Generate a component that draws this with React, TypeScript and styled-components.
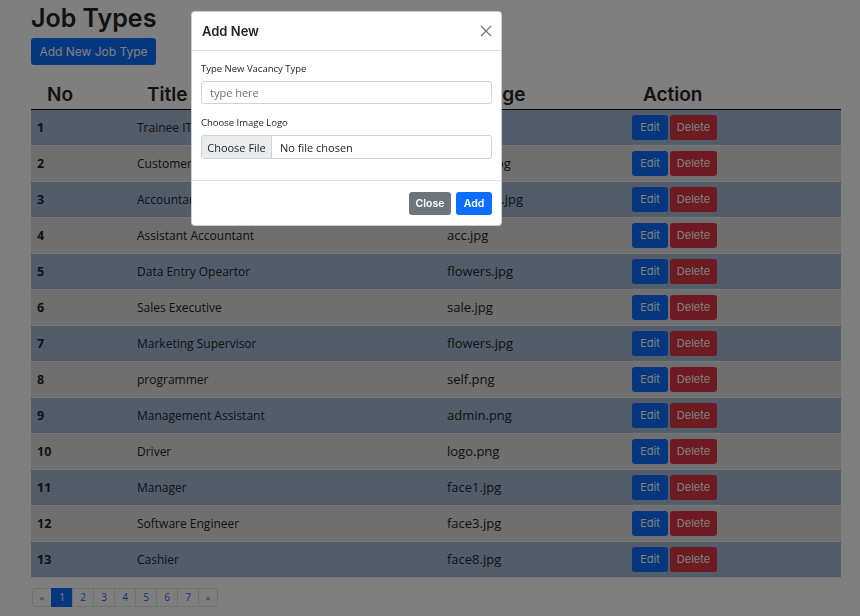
import styled, { createGlobalStyle } from 'styled-components'

const GlobalStyle = createGlobalStyle`
  body {
    margin: 0;
    background: #ffffff;
    font-family: "Open Sans", "Liberation Sans", sans-serif;
    color: #212529;
  }
  * { box-sizing: border-box; }
`

const Page = styled.div`
  padding: 3px 19px 0 31px;
  width: 860px;
  height: 616px;
`

const Heading = styled.h1`
  margin: 0;
  font-family: Inter, "Liberation Sans", sans-serif;
  font-weight: 600;
  font-size: 25px;
  line-height: 30px;
  color: #212529;
`

const PrimaryButton = styled.button`
  display: block;
  margin-top: 5px;
  height: 27px;
  width: 125px;
  padding: 0;
  border: none;
  border-radius: 3px;
  background: #0d6efd;
  color: #ffffff;
  font-family: Inter, "Liberation Sans", sans-serif;
  font-size: 12px;
`

const Table = styled.table`
  margin-top: 17px;
  width: 810px;
  border-collapse: collapse;
  table-layout: fixed;
`

const Th = styled.th<{ $w: number; $pad: number }>`
  width: ${(p) => p.$w}px;
  height: 27px;
  padding: 0 0 1px ${(p) => p.$pad}px;
  text-align: left;
  font-family: Inter, "Liberation Sans", sans-serif;
  font-weight: 600;
  font-size: 19px;
  border-bottom: 1px solid #000000;
`

const Row = styled.tr<{ $odd: boolean }>`
  height: 36px;
  background: ${(p) => (p.$odd ? '#a6b8d2' : '#dedede')};
  border-bottom: 1px solid #eef0f3;
`

const Td = styled.td<{ $bold?: boolean; $size?: number }>`
  padding: 0 0 0 6px;
  font-size: ${(p) => p.$size ?? 12.5}px;
  font-weight: ${(p) => (p.$bold ? 700 : 400)};
  vertical-align: middle;
`

const Actions = styled.div`
  display: flex;
  gap: 2px;
`

const SmallButton = styled.button<{ $danger?: boolean }>`
  height: 25px;
  width: ${(p) => (p.$danger ? 47 : 36)}px;
  padding: 0;
  border: none;
  border-radius: 3px;
  background: ${(p) => (p.$danger ? '#dc3545' : '#0d6efd')};
  color: #ffffff;
  font-family: Inter, "Liberation Sans", sans-serif;
  font-size: 11px;
`

const Pagination = styled.ul`
  display: flex;
  margin: 10px 0 0 1px;
  padding: 0;
  list-style: none;
`

const PageItem = styled.li<{ $active?: boolean; $arrow?: boolean }>`
  width: ${(p) => (p.$arrow ? 20 : 22)}px;
  height: 19px;
  display: flex;
  align-items: center;
  justify-content: center;
  margin-left: -1px;
  border: 1px solid ${(p) => (p.$active ? '#0d6efd' : '#dee2e6')};
  background: ${(p) => (p.$active ? '#0d6efd' : '#ffffff')};
  color: ${(p) => (p.$active ? '#ffffff' : p.$arrow ? '#6c757d' : '#0d6efd')};
  font-size: ${(p) => (p.$arrow ? 9 : 10)}px;
  &:first-child { border-radius: 3px 0 0 3px; margin-left: 0; }
  &:last-child { border-radius: 0 3px 3px 0; }
`

const Backdrop = styled.div`
  position: fixed;
  inset: 0;
  background: rgba(0, 0, 0, 0.5);
`

const Modal = styled.div`
  position: fixed;
  left: 191px;
  top: 11px;
  width: 311px;
  height: 215px;
  background: #ffffff;
  border: 1px solid rgba(0, 0, 0, 0.2);
  border-radius: 4px;
  display: flex;
  flex-direction: column;
`

const ModalHeader = styled.div`
  height: 39px;
  padding: 0 9px 0 10px;
  display: flex;
  align-items: center;
  justify-content: space-between;
  border-bottom: 1px solid #dee2e6;
`

const ModalTitle = styled.h5`
  margin: 0;
  font-family: Inter, "Liberation Sans", sans-serif;
  font-weight: 600;
  font-size: 13px;
  color: #212529;
`

const CloseX = styled.button`
  border: none;
  background: none;
  padding: 0;
  width: 12px;
  height: 12px;
  display: flex;
  color: #6c757d;
`

const ModalBody = styled.div`
  padding: 11px 9px 0 9px;
  flex: 1;
`

const Label = styled.label<{ $first?: boolean }>`
  display: block;
  font-size: 9.5px;
  line-height: 13px;
  margin-top: ${(p) => (p.$first ? 0 : 12)}px;
  margin-bottom: 6px;
  color: #212529;
`

const TextInput = styled.input`
  display: block;
  width: 291px;
  height: 23px;
  padding: 0 8px;
  border: 1px solid #ced4da;
  border-radius: 3px;
  font-family: "Open Sans", "Liberation Sans", sans-serif;
  font-size: 11px;
  &::placeholder { color: #6c757d; }
`

const FileInput = styled.div`
  display: flex;
  width: 291px;
  height: 24px;
  border: 1px solid #ced4da;
  border-radius: 3px;
  overflow: hidden;
  font-size: 11px;
`

const FileButton = styled.span`
  width: 70px;
  display: flex;
  align-items: center;
  justify-content: center;
  background: #e9ecef;
  border-right: 1px solid #ced4da;
  color: #212529;
`

const FileName = styled.span`
  display: flex;
  align-items: center;
  padding-left: 8px;
  color: #212529;
`

const ModalFooter = styled.div`
  height: 45px;
  border-top: 1px solid #dee2e6;
  display: flex;
  align-items: center;
  justify-content: flex-end;
  gap: 5px;
  padding: 0 9px 0 0;
`

const FooterButton = styled.button<{ $secondary?: boolean }>`
  height: 23px;
  width: ${(p) => (p.$secondary ? 42 : 36)}px;
  padding: 0;
  border: none;
  border-radius: 3px;
  background: ${(p) => (p.$secondary ? '#6c757d' : '#0d6efd')};
  color: #ffffff;
  font-family: Inter, "Liberation Sans", sans-serif;
  font-weight: 600;
  font-size: 10.5px;
`

const jobs = [
  ['Trainee IT Officer', 'it.jpg'],
  ['Customer Service', 'service.jpg'],
  ['Accountant', 'accounts.jpg'],
  ['Assistant Accountant', 'acc.jpg'],
  ['Data Entry Opeartor', 'flowers.jpg'],
  ['Sales Executive', 'sale.jpg'],
  ['Marketing Supervisor', 'flowers.jpg'],
  ['programmer', 'self.png'],
  ['Management Assistant', 'admin.png'],
  ['Driver', 'logo.png'],
  ['Manager', 'face1.jpg'],
  ['Software Engineer', 'face3.jpg'],
  ['Cashier', 'face8.jpg'],
]

export default function App() {
  return (
    <>
      <GlobalStyle />
      <Page>
        <Heading>Job Types</Heading>
        <PrimaryButton>Add New Job Type</PrimaryButton>
        <Table>
          <thead>
            <tr>
              <Th $w={100} $pad={16}>No</Th>
              <Th $w={310} $pad={16}>Title</Th>
              <Th $w={185} $pad={28}>Image</Th>
              <Th $w={215} $pad={17}>Action</Th>
            </tr>
          </thead>
          <tbody>
            {jobs.map(([title, image], i) => (
              <Row key={i} $odd={i % 2 === 0}>
                <Td $bold>{i + 1}</Td>
                <Td $size={12}>{title}</Td>
                <Td $size={13}>{image}</Td>
                <Td>
                  <Actions>
                    <SmallButton>Edit</SmallButton>
                    <SmallButton $danger>Delete</SmallButton>
                  </Actions>
                </Td>
              </Row>
            ))}
          </tbody>
        </Table>
        <Pagination>
          <PageItem $arrow>«</PageItem>
          {[1, 2, 3, 4, 5, 6, 7].map((n) => (
            <PageItem key={n} $active={n === 1}>
              {n}
            </PageItem>
          ))}
          <PageItem $arrow>»</PageItem>
        </Pagination>
      </Page>
      <Backdrop />
      <Modal>
        <ModalHeader>
          <ModalTitle>Add New</ModalTitle>
          <CloseX>
            <svg width="12" height="12" viewBox="0 0 12 12" fill="none" stroke="currentColor" strokeWidth="1.2">
              <path d="M1 1l10 10M11 1L1 11" />
            </svg>
          </CloseX>
        </ModalHeader>
        <ModalBody>
          <Label $first>Type New Vacancy Type</Label>
          <TextInput placeholder="type here" />
          <Label>Choose Image Logo</Label>
          <FileInput>
            <FileButton>Choose File</FileButton>
            <FileName>No file chosen</FileName>
          </FileInput>
        </ModalBody>
        <ModalFooter>
          <FooterButton $secondary>Close</FooterButton>
          <FooterButton>Add</FooterButton>
        </ModalFooter>
      </Modal>
    </>
  )
}
